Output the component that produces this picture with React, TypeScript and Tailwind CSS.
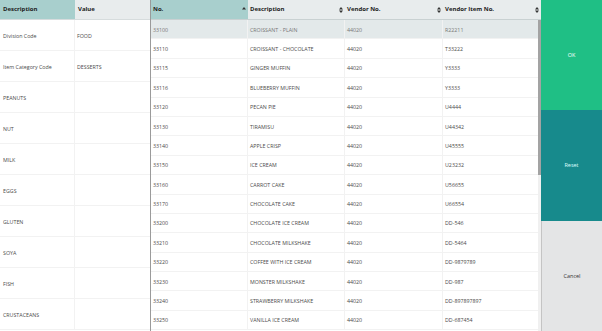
import React from 'react'

const attributes = [
  { label: 'Division Code', value: 'FOOD' },
  { label: 'Item Category Code', value: 'DESSERTS' },
  { label: 'PEANUTS', value: '' },
  { label: 'NUT', value: '' },
  { label: 'MILK', value: '' },
  { label: 'EGGS', value: '' },
  { label: 'GLUTEN', value: '' },
  { label: 'SOYA', value: '' },
  { label: 'FISH', value: '' },
  { label: 'CRUSTACEANS', value: '' },
]

const items = [
  ['33100', 'CROISSANT - PLAIN', '44020', 'R22211'],
  ['33110', 'CROISSANT - CHOCOLATE', '44020', 'T33222'],
  ['33115', 'GINGER MUFFIN', '44020', 'Y3333'],
  ['33116', 'BLUEBERRY MUFFIN', '44020', 'Y3333'],
  ['33120', 'PECAN PIE', '44020', 'U4444'],
  ['33130', 'TIRAMISU', '44020', 'U44342'],
  ['33140', 'APPLE CRISP', '44020', 'U45555'],
  ['33150', 'ICE CREAM', '44020', 'U23232'],
  ['33160', 'CARROT CAKE', '44020', 'U56655'],
  ['33170', 'CHOCOLATE CAKE', '44020', 'U66554'],
  ['33200', 'CHOCOLATE ICE CREAM', '44020', 'DD-546'],
  ['33210', 'CHOCOLATE MILKSHAKE', '44020', 'DD-5464'],
  ['33220', 'COFFEE WITH ICE CREAM', '44020', 'DD-9879789'],
  ['33230', 'MONSTER MILKSHAKE', '44020', 'DD-987'],
  ['33240', 'STRAWBERRY MILKSHAKE', '44020', 'DD-897897897'],
  ['33250', 'VANILLA ICE CREAM', '44020', 'DD-687454'],
]

function SortIcon({ up }: { up?: boolean }) {
  return (
    <svg width="4" height="6" viewBox="0 0 4 6" className="shrink-0">
      <path d="M2 0 L4 2.4 L0 2.4 Z" fill="#333" />
      {!up && <path d="M2 6 L4 3.6 L0 3.6 Z" fill="#333" />}
    </svg>
  )
}

export default function App() {
  const headers = ['No.', 'Description', 'Vendor No.', 'Vendor Item No.']

  return (
    <div
      className="flex w-[602px] h-[331px] overflow-hidden bg-white text-[#4a4a4a]"
      style={{ fontFamily: '"Open Sans", "Noto Sans", sans-serif' }}
    >
      {/* attribute filter panel */}
      <div className="w-[150px] shrink-0 flex flex-col">
        <div className="grid grid-cols-[75px_75px] h-[20px] border-b border-[#d6dcdd] text-[6px] font-bold text-[#222]">
          <div className="bg-[#a8cfcd] flex items-center pl-[3px]">Description</div>
          <div className="bg-[#e8eced] flex items-center pl-[3px]">Value</div>
        </div>
        {attributes.map((a) => (
          <div key={a.label} className="grid grid-cols-[75px_75px] h-[31px] shrink-0 border-b border-[#f2f2f2] text-[5.3px] leading-none">
            <div className="flex items-center pl-[3px] pt-[4px] border-r border-[#f2f2f2]">{a.label}</div>
            <div className="flex items-center pl-[2px] pt-[4px]">{a.value}</div>
          </div>
        ))}
      </div>

      <div className="w-[1px] shrink-0 bg-[#9a9a9a]" />

      {/* items table */}
      <div className="w-[390px] shrink-0 flex flex-col">
        <div className="grid grid-cols-[97px_97px_98px_98px] h-[20px] border-b border-[#c9d1d2] text-[6px] font-bold text-[#222]">
          {headers.map((h, i) => (
            <div
              key={h}
              className={`flex items-center justify-between pl-[2px] pr-[2px] ${i === 0 ? 'bg-[#a8cfcd]' : 'bg-[#e8eced]'}`}
            >
              <span>{h}</span>
              <SortIcon up={i === 0} />
            </div>
          ))}
        </div>
        <div className="flex flex-1 min-h-0">
          <div className="flex-1 flex flex-col">
            {items.map((row, r) => (
              <div
                key={row[0]}
                className={`grid grid-cols-[97px_97px_98px_95px] h-[19.4px] shrink-0 border-b border-[#f2f2f2] text-[5.3px] leading-none ${r === 0 ? 'bg-[#e3e9ea] text-[#777]' : ''}`}
              >
                {row.map((cell, c) => (
                  <div key={c} className={`flex items-center pl-[2px] pt-[2px] ${c < 3 ? 'border-r border-[#f2f2f2]' : ''}`}>
                    {cell}
                  </div>
                ))}
              </div>
            ))}
          </div>
          <div className="w-[3px] shrink-0 bg-[#f0f0f0] flex flex-col">
            <div className="h-[155px] bg-[#a3a3a3]" />
          </div>
        </div>
      </div>

      {/* action buttons */}
      <div className="flex-1 flex flex-col text-[5.5px]">
        <button className="h-[110px] bg-[#1fbf85] text-white">OK</button>
        <button className="h-[111px] bg-[#178a8c] text-[#dff]">Reset</button>
        <button className="flex-1 bg-[#e4e5e6] text-[#333] border-l border-[#c4c4c4]">Cancel</button>
      </div>
    </div>
  )
}
